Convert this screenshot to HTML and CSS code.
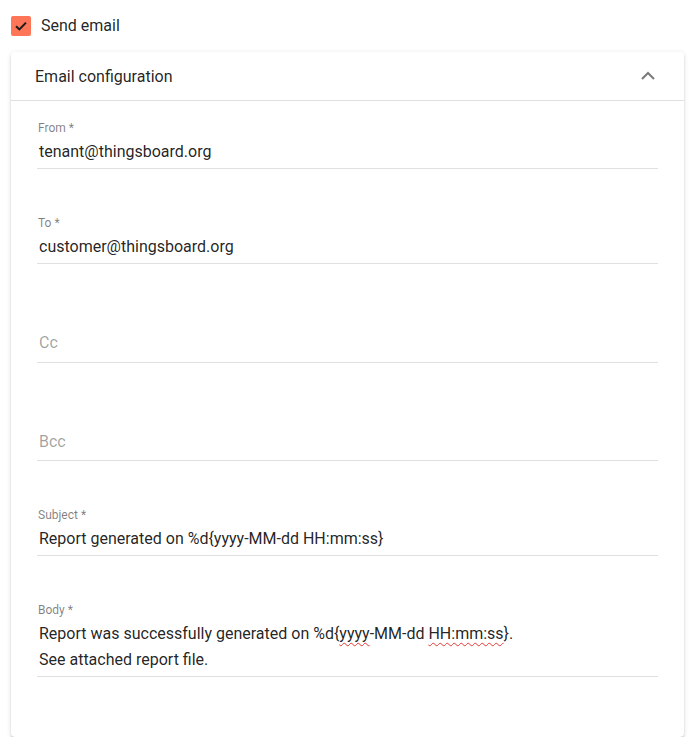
FILE: index.html
```html
<!DOCTYPE html>
<html>
<head>
<meta charset="utf-8">
<link rel="stylesheet" href="styles.css">
</head>
<body>
<div class="page">
  <label class="check-row">
    <span class="checkbox">
      <svg width="20" height="20" viewBox="0 0 20 20"><polyline points="5,10.2 8.4,13.4 15,6.6" fill="none" stroke="#1a1a1a" stroke-width="2"/></svg>
    </span>
    <span class="check-label">Send email</span>
  </label>

  <section class="panel">
    <header class="panel-header">
      <span class="panel-title">Email configuration</span>
      <svg class="chevron" width="24" height="24" viewBox="0 0 24 24"><polyline points="6,15 12,9 18,15" fill="none" stroke="#7b7b7b" stroke-width="2"/></svg>
    </header>
    <div class="panel-body">
      <div class="field">
        <div class="label">From *</div>
        <div class="value">tenant@thingsboard.org</div>
        <div class="line"></div>
      </div>
      <div class="field">
        <div class="label">To *</div>
        <div class="value">customer@thingsboard.org</div>
        <div class="line"></div>
      </div>
      <div class="field chips">
        <div class="label"></div>
        <div class="value placeholder">Cc</div>
        <div class="line"></div>
      </div>
      <div class="field chips last-chips">
        <div class="label"></div>
        <div class="value placeholder">Bcc</div>
        <div class="line"></div>
      </div>
      <div class="field">
        <div class="label">Subject *</div>
        <div class="value">Report generated on %d{yyyy-MM-dd HH:mm:ss}</div>
        <div class="line"></div>
      </div>
      <div class="field area">
        <div class="label">Body *</div>
        <div class="value">Report was successfully generated on %d{<span class="spell">yyyy</span>-MM-dd <span class="spell">HH:mm:ss</span>}.<br>See attached report file.</div>
        <div class="line"></div>
      </div>
    </div>
  </section>
</div>
</body>
</html>
```

FILE: styles.css
```css
html, body {
  margin: 0;
  padding: 0;
  background: #ffffff;
}

body {
  font-family: Roboto, "Liberation Sans", sans-serif;
  color: rgba(0, 0, 0, 0.87);
}

.page {
  width: 673px;
  padding: 16px 14px 0 11px;
}

.check-row {
  display: flex;
  align-items: center;
  gap: 10px;
  height: 20px;
}

.checkbox {
  width: 20px;
  height: 20px;
  border-radius: 2px;
  background: #fe7557;
  display: flex;
}

.check-label {
  font-size: 16px;
  line-height: 20px;
}

.panel {
  margin-top: 16px;
  background: #fff;
  border-radius: 4px;
  box-shadow: 0 3px 1px -2px rgba(0,0,0,.2), 0 2px 2px 0 rgba(0,0,0,.14), 0 1px 5px 0 rgba(0,0,0,.12);
  height: 685px;
}

.panel-header {
  height: 48px;
  display: flex;
  align-items: center;
  justify-content: space-between;
  padding: 0 24px;
  border-bottom: 1px solid rgba(0, 0, 0, 0.12);
}

.panel-title {
  font-size: 16px;
}

.chevron {
  display: block;
}

.panel-body {
  padding: 20px 26px 0 26px;
  display: flex;
  flex-direction: column;
  gap: 47px;
}

.label {
  font-size: 12px;
  line-height: 14px;
  height: 14px;
  color: rgba(0, 0, 0, 0.5);
  margin-bottom: 5px;
  padding-left: 1px;
}

.value {
  font-size: 16px;
  line-height: 24px;
  padding-left: 2px;
  margin-bottom: 4px;
}

.chips .value {
  padding-top: 1px;
  margin-bottom: 7px;
}

.last-chips .value {
  margin-bottom: 6px;
}

.placeholder {
  color: rgba(0, 0, 0, 0.38);
}

.area .value {
  line-height: 26px;
  margin-top: -1px;
  margin-bottom: 3px;
}

.spell {
  text-decoration: underline wavy #e53935;
  text-decoration-thickness: 1px;
  text-underline-offset: 3px;
}

.line {
  height: 1px;
  background: rgba(0, 0, 0, 0.12);
}
```
